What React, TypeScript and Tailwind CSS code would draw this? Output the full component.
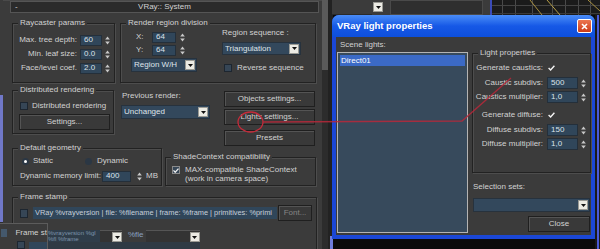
import React from 'react';

// small widgets drawn in the old 3ds Max dark style

function Spinner({ className = '' }: { className?: string }) {
  return (
    <svg width="5" height="9" viewBox="0 0 5 9" className={`shrink-0 ${className}`}>
      <path d="M2.5 0.6L4.8 3.6H0.2Z" fill="#c9c9c9" />
      <path d="M2.5 8.4L4.8 5.4H0.2Z" fill="#c9c9c9" />
    </svg>
  );
}

function DropArrow({ className = '' }: { className?: string }) {
  return (
    <div className={`flex h-[10px] w-[10px] shrink-0 items-center justify-center border border-[#9a9a94] bg-[#ecebe4] ${className}`}>
      <svg width="5" height="3" viewBox="0 0 5 3">
        <path d="M0 0H5L2.5 3Z" fill="#111" />
      </svg>
    </div>
  );
}

function Field({ value, className = '' }: { value: string; className?: string }) {
  return (
    <div className={`flex shrink-0 items-center border border-[#242f3a] bg-[#30465a] pl-[3px] text-[#dde3ea] ${className}`}>
      {value}
    </div>
  );
}

function Dropdown({ label, className = '' }: { label: string; className?: string }) {
  return (
    <div className={`flex shrink-0 items-center justify-between border border-[#27323d] bg-[#33485c] pl-[2px] pr-[1px] text-[#dfe4ea] ${className}`}>
      <span className="truncate">{label}</span>
      <DropArrow />
    </div>
  );
}

function Btn({ children, className = '' }: { children?: React.ReactNode; className?: string }) {
  return (
    <div className={`flex shrink-0 items-center justify-center border border-[#1f1f1f] bg-[#393939] shadow-[inset_1px_1px_0_#545454] ${className}`}>
      {children}
    </div>
  );
}

function Check({ checked = false, className = '' }: { checked?: boolean; className?: string }) {
  return (
    <div className={`flex h-[8px] w-[8px] shrink-0 items-center justify-center border border-[#1d2630] bg-[#364656] ${className}`}>
      {checked && (
        <svg width="6" height="5" viewBox="0 0 6 5">
          <path d="M0.5 2.4L2.2 4.2L5.5 0.6" stroke="#f4f4f4" strokeWidth="1.3" fill="none" />
        </svg>
      )}
    </div>
  );
}

function Radio({ on = false }: { on?: boolean }) {
  return (
    <div className="flex h-[7px] w-[7px] shrink-0 items-center justify-center rounded-full bg-[#2b3744]">
      {on && <div className="h-[3px] w-[3px] rounded-full bg-white" />}
    </div>
  );
}

function Group({ title, className = '', children }: { title: string; className?: string; children?: React.ReactNode }) {
  return (
    <fieldset className={`shrink-0 border border-[#222] shadow-[inset_1px_1px_0_#4d4d4d,1px_1px_0_#4d4d4d] ${className}`}>
      <legend className="relative ml-[5px] bg-[#3b3b3b] px-[2px] leading-[10px] whitespace-nowrap">{title}</legend>
      {children}
    </fieldset>
  );
}

function SpinRow({ label, value }: { label: string; value: string }) {
  return (
    <div className="flex h-[12px] items-center">
      <span className="w-[64px] text-right whitespace-nowrap">{label}</span>
      <Field value={value} className="ml-[3px] h-[11px] w-[22px]" />
      <Spinner className="ml-[3px]" />
    </div>
  );
}

function LightRow({ label, value, className = '' }: { label: string; value?: string; className?: string }) {
  return (
    <div className={`flex h-[14px] items-center ${className}`}>
      <span className="w-[70px] text-right whitespace-nowrap">{label}</span>
      {value ? (
        <>
          <Field value={value} className="ml-[4px] h-[12px] w-[31px]" />
          <Spinner className="ml-[3px]" />
        </>
      ) : (
        <div className="ml-[4px] flex h-[8px] w-[8px] items-center justify-center">
          <svg width="7" height="6" viewBox="0 0 7 6">
            <path d="M0.6 3L2.6 5L6.4 0.8" stroke="#f4f4f4" strokeWidth="1.4" fill="none" />
          </svg>
        </div>
      )}
    </div>
  );
}

function ViewportGrid() {
  return (
    <svg width="110" height="15" viewBox="0 0 110 15" className="block">
      <rect width="110" height="15" fill="#1b1b1b" />
      <rect x="0" y="0" width="2" height="15" fill="#3b4bb8" />
      {[12, 25, 42, 62, 75, 88, 100].map((x) => (
        <line key={x} x1={x + 0.5} y1="0" x2={x + 0.5} y2="15" stroke="#4a4a4a" />
      ))}
      <line x1="2" y1="5.5" x2="110" y2="5.5" stroke="#444" />
      <line x1="2" y1="13.5" x2="110" y2="13.5" stroke="#3a3a3a" />
      <line x1="40" y1="0" x2="52" y2="15" stroke="#a89040" />
      <line x1="57" y1="0" x2="70" y2="15" stroke="#b8a048" />
      <line x1="98" y1="0" x2="110" y2="11" stroke="#a89040" />
    </svg>
  );
}

function LightDialog() {
  return (
    <div className="absolute left-[332px] top-[15px] flex h-[224px] w-[263px] flex-col rounded-t-[7px] bg-[#1b47d6]">
      <div className="flex h-[22px] shrink-0 items-center rounded-t-[7px] bg-gradient-to-b from-[#4a8cf7] via-[#1658e6] to-[#0d4fdc] pl-[5px] pr-[3px]">
        <span className="text-[9.5px] font-bold text-white">VRay light properties</span>
        <div className="ml-auto flex h-[14px] w-[15px] items-center justify-center rounded-[2px] border border-white bg-gradient-to-b from-[#ec7650] to-[#cc3a16]">
          <svg width="7" height="7" viewBox="0 0 7 7">
            <path d="M1 1L6 6M6 1L1 6" stroke="#fff" strokeWidth="1.6" />
          </svg>
        </div>
      </div>
      <div className="mx-[4px] flex h-[198px] items-start bg-[#3b3b3b]">
        <div className="w-[132px] pl-[1px]">
          <div className="pl-[3px] pt-[3px] leading-[10px]">Scene lights:</div>
          <div className="mt-[2px] h-[181px] w-[131px] border border-[#b4b4b4] bg-[#374a5c] p-[2px]">
            <div className="h-[11px] bg-[#3b6ac6] pl-[1px] leading-[11px] text-white">Direct01</div>
          </div>
        </div>
        <div className="ml-[4px] flex w-[119px] flex-col">
          <Group title="Light properties" className="mt-[11px] h-[125px] w-[119px]">
            <div className="pt-[3px]">
              <LightRow label="Generate caustics:" />
              <LightRow label="Caustic subdivs:" value="500" className="mt-[1px]" />
              <LightRow label="Caustics multiplier:" value="1,0" />
              <LightRow label="Generate diffuse:" className="mt-[4px]" />
              <LightRow label="Diffuse subdivs:" value="150" className="mt-[1px]" />
              <LightRow label="Diffuse multiplier:" value="1,0" />
            </div>
          </Group>
          <div className="mt-[9px] pl-[1px] leading-[10px]">Selection sets:</div>
          <Dropdown label="" className="ml-[1px] mt-[6px] h-[14px] w-[117px]" />
          <Btn className="mr-[1px] mt-[4px] h-[16px] w-[62px] self-end">Close</Btn>
        </div>
      </div>
    </div>
  );
}

export default function App() {
  return (
    <div className="relative flex h-[249px] w-[600px] overflow-hidden bg-[#0b0b0b] font-['Liberation_Sans',Arial,sans-serif] text-[8px] leading-[10px] text-[#d2d2d2]">
      {/* window edge behind the rollout */}
      <div className="flex w-[3px] shrink-0 flex-col">
        <div className="h-[95px] bg-[#3b3b3b]" />
        <div className="h-[127px] bg-[#7078c8]" />
        <div className="flex-1 bg-[#2e2e2e]" />
      </div>

      {/* VRay:: System rollout */}
      <div className="flex w-[319px] shrink-0 flex-col bg-[#3b3b3b]">
        <div className="h-[4px] border-t border-[#4a4a4a] bg-[#303030]" />
        <div className="ml-[7px] flex h-[12px] w-[309px] items-center border border-[#555] bg-[#2b2b2b]">
          <span className="w-[20px] pl-[4px]">-</span>
          <span className="flex-1 pr-[20px] text-center">VRay:: System</span>
        </div>

        <div className="mt-[5px] flex gap-[5px] pl-[9px]">
          <Group title="Raycaster params" className="h-[65px] w-[103px]">
            <div className="flex flex-col gap-[2px] pt-[6px]">
              <SpinRow label="Max. tree depth:" value="60" />
              <SpinRow label="Min. leaf size:" value="0.0" />
              <SpinRow label="Face/level coef." value="2.0" />
            </div>
          </Group>
          <Group title="Render region division" className="h-[65px] w-[196px]">
            <div className="flex">
              <div className="w-[101px] pt-[3px]">
                <div className="flex h-[12px] items-center">
                  <span className="ml-[15px] w-[16px]">X:</span>
                  <Field value="64" className="h-[11px] w-[24px]" />
                  <Spinner className="ml-[4px]" />
                </div>
                <div className="mt-[1px] flex h-[12px] items-center">
                  <span className="ml-[15px] w-[16px]">Y:</span>
                  <Field value="64" className="h-[11px] w-[24px]" />
                  <Spinner className="ml-[4px]" />
                </div>
                <Dropdown label="Region W/H" className="ml-[10px] mt-[2px] h-[14px] w-[66px]" />
              </div>
              <div className="w-[93px]">
                <div className="whitespace-nowrap">Region sequence :</div>
                <Dropdown label="Triangulation" className="mt-[4px] h-[13px] w-[79px]" />
                <div className="mt-[8px] flex h-[9px] items-center">
                  <Check className="ml-[2px] bg-[#2f3c4a]" />
                  <span className="ml-[5px] whitespace-nowrap">Reverse sequence</span>
                </div>
              </div>
            </div>
          </Group>
        </div>

        <div className="mt-[2px] flex h-[58px] items-start pl-[9px]">
          <Group title="Distributed rendering" className="h-[49px] w-[102px]">
            <div className="mt-[6px] flex h-[9px] items-center">
              <Check className="ml-[7px]" />
              <span className="ml-[4px] whitespace-nowrap">Distributed rendering</span>
            </div>
            <Btn className="ml-[6px] mt-[4px] h-[16px] w-[91px]">Settings...</Btn>
          </Group>
          <div className="ml-[7px] w-[90px] shrink-0">
            <div className="pl-[1px] pt-[6px]">Previous render:</div>
            <Dropdown label="Unchanged" className="mt-[4px] h-[14px] w-[89px]" />
          </div>
          <div className="ml-[13px] flex w-[91px] shrink-0 flex-col pt-[6px]">
            <Btn className="h-[16px]">Objects settings...</Btn>
            <Btn className="mt-[2px] h-[16px]">Lights settings...</Btn>
            <Btn className="mt-[5px] h-[16px]">Presets</Btn>
          </div>
        </div>

        <div className="flex items-start pl-[9px]">
          <Group title="Default geometry" className="h-[43px] w-[150px]">
            <div className="mt-[3px] flex h-[10px] items-center">
              <div className="ml-[9px]"><Radio on /></div>
              <span className="ml-[4px] w-[52px]">Static</span>
              <Radio />
              <span className="ml-[5px]">Dynamic</span>
            </div>
            <div className="mt-[4px] flex h-[12px] items-center">
              <span className="ml-[7px] w-[82px] whitespace-nowrap">Dynamic memory limit:</span>
              <Field value="400" className="h-[11px] w-[29px]" />
              <Spinner className="ml-[6px]" />
              <span className="ml-[4px]">MB</span>
            </div>
          </Group>
          <Group title="ShadeContext compatibility" className="ml-[3px] mt-[9px] h-[34px] w-[151px]">
            <div className="mt-[3px] flex items-start">
              <Check checked className="ml-[6px] mt-[1px] border-[#8a8a8a] bg-[#2b2b2b]" />
              <div className="ml-[5px] leading-[9px] whitespace-nowrap">
                <div>MAX-compatible ShadeContext</div>
                <div>(work in camera space)</div>
              </div>
            </div>
          </Group>
        </div>

        <Group title="Frame stamp" className="ml-[9px] mt-[6px] h-[70px] w-[305px]">
          <div className="mt-[3px] flex h-[16px] items-center">
            <Check className="ml-[7px] h-[9px]" />
            <div className="ml-[5px] h-[12px] w-[244px] overflow-hidden bg-[#30465a] pl-[2px]">
              <span className="block whitespace-nowrap text-[7.4px] leading-[12px] text-[#c7d0da]">
                VRay %vrayversion | file: %filename | frame: %frame | primitives: %primi
              </span>
            </div>
            <Btn className="ml-[1px] h-[16px] w-[34px] text-[#858585]">Font...</Btn>
          </div>
        </Group>
      </div>

      {/* scroll bar of the command panel */}
      <div className="flex w-[6px] shrink-0 flex-col">
        <div className="h-[70px] bg-[#5a5a5a]" />
        <div className="flex-1 bg-[#2c2c2c]" />
      </div>

      {/* area behind the dialog */}
      <div className="flex flex-1 flex-col">
        <div className="flex h-[15px] shrink-0">
          <div className="w-[4px] bg-[#222]" />
          <div className="w-[40px] border-b border-[#2a2a2a] bg-[#3b3b3b]" />
          <div className="w-[12px] bg-[#3b3b3b] pl-[1px] pt-[2px]">
            <DropArrow />
          </div>
          <div className="w-[6px] bg-[#3b3b3b]" />
          <div className="w-[93px] border border-[#4a4a4a] bg-[#2f2f2f]" />
          <div className="w-[7px] bg-[#3b3b3b]" />
          <ViewportGrid />
        </div>
        <div className="flex flex-1">
          <div className="w-[2px] bg-[#222]" />
          <div className="flex w-[3px] flex-col">
            <div className="flex-1 bg-[#222]" />
            <div className="h-[13px] bg-[#6f7ddc]" />
          </div>
          <div className="flex-1 bg-[#0b0b0b]" />
          <div className="flex w-[5px] bg-[#1a1a1a] pl-[2px]">
            <div className="w-[2px] bg-[#4a5ad8]" />
          </div>
        </div>
      </div>

      {/* redraw glitch at the bottom left */}
      <div className="absolute left-0 top-[223px] flex h-[26px] w-[190px]">
        <div className="flex w-[48px] flex-col border-r border-t border-[#5c5c5c] bg-[#3b3b3b]">
          <div className="flex h-[17px] items-center">
            <div className="ml-[1px] h-[8px] w-[8px] bg-[#44586c]" />
            <span className="ml-[8px] whitespace-nowrap">Frame st</span>
          </div>
          <div className="flex items-center">
            <Check className="ml-[17px] h-[7px]" />
            <div className="ml-[4px] h-[7px] flex-1 bg-[#30465a]" />
          </div>
        </div>
        <div className="flex flex-1 flex-col">
          <div className="flex h-[19px] items-end">
            <div className="h-[12px] w-[52px] overflow-hidden whitespace-nowrap bg-[#2f3d4a] text-[6px] leading-[6px] text-[#7f95aa]">
              %vrayversion %gl<br />%fl %frame
            </div>
            <div className="flex h-[12px] w-[22px] items-start justify-end border-t border-[#555] bg-[#333]">
              <DropArrow className="mt-[1px]" />
            </div>
            <span className="ml-[6px] mb-[2px] text-[#8aa0c0]">%fle</span>
            <div className="ml-[2px] flex h-[12px] w-[54px] items-start justify-end border-t border-[#555] bg-[#333]">
              <DropArrow className="mt-[1px]" />
            </div>
          </div>
          <div className="flex-1 bg-[#2f3a44]" />
        </div>
      </div>

      <LightDialog />

      {/* red annotation */}
      <svg width="600" height="249" viewBox="0 0 600 249" className="pointer-events-none absolute left-0 top-0">
        <ellipse cx="250.5" cy="122" rx="12.5" ry="10" fill="none" stroke="#c42b3a" strokeWidth="1.3" />
        <polyline points="263,122 462,121 511,78" fill="none" stroke="#b8283a" strokeWidth="1.3" opacity="0.85" />
      </svg>
    </div>
  );
}
